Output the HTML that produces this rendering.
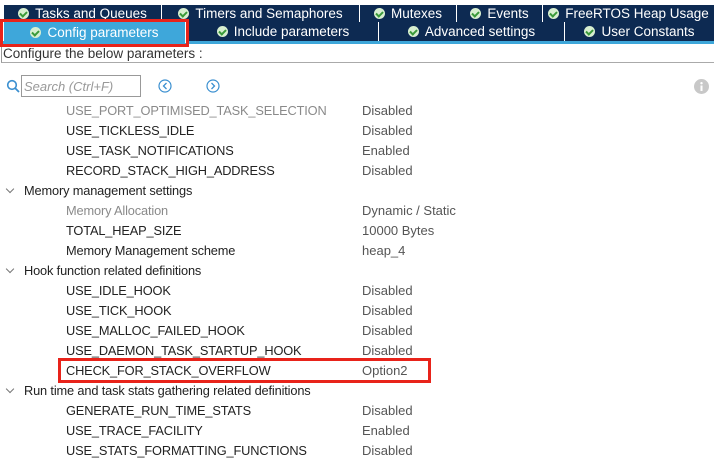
<!DOCTYPE html>
<html><head><style>
*{margin:0;padding:0;box-sizing:border-box}
body{width:714px;height:465px;background:#fff;font-family:"Liberation Sans",sans-serif;position:relative;overflow:hidden}
.tab{position:absolute;background:#0d2a52;color:#fff;font-size:13.5px;display:flex;align-items:center;justify-content:center;border-right:1px solid #fff;white-space:nowrap}
.ck{display:inline-block;width:11px;height:11px;border-radius:50%;background:#d8efd0;margin-right:6px;position:relative}
.ck:after{content:"";position:absolute;left:3px;top:2px;width:3px;height:5px;border:solid #3a9a3a;border-width:0 2px 2px 0;transform:rotate(45deg)}
.r{position:absolute;font-size:12.8px;letter-spacing:-0.15px;color:#222;white-space:nowrap;line-height:20px;margin-top:1px}
.g{color:#8a8a8a}
.v{position:absolute;left:362px;font-size:13px;color:#555;line-height:20px;margin-top:1px}
.arr{position:absolute;left:7px;width:6px;height:6px;border:solid #777;border-width:0 1px 1px 0;transform:rotate(45deg)}
</style></head><body>
<div class="tab" style="left:4px;top:5px;width:158px;height:17px"><span class="ck"></span>Tasks and Queues</div>
<div class="tab" style="left:162px;top:5px;width:198px;height:17px"><span class="ck"></span>Timers and Semaphores</div>
<div class="tab" style="left:360px;top:5px;width:97px;height:17px"><span class="ck"></span>Mutexes</div>
<div class="tab" style="left:457px;top:5px;width:86px;height:17px"><span class="ck"></span>Events</div>
<div class="tab" style="left:543px;top:5px;width:171px;height:17px;border-right:0"><span class="ck"></span>FreeRTOS Heap Usage</div>
<div class="tab" style="left:188px;top:22px;width:191px;height:19px"><span class="ck"></span>Include parameters</div>
<div class="tab" style="left:379px;top:22px;width:186px;height:19px"><span class="ck"></span>Advanced settings</div>
<div class="tab" style="left:565px;top:22px;width:149px;height:19px;border-right:0"><span class="ck"></span>User Constants</div>
<div style="position:absolute;left:0;top:41px;width:714px;height:3px;background:#3ea7da"></div>
<div class="tab" style="left:4px;top:22px;width:182px;height:21px;background:#3ea7da"><span class="ck"></span>Config parameters</div>
<div style="position:absolute;left:0;top:19px;width:189px;height:28px;border:3px solid #e8231a"></div>
<div style="position:absolute;left:1px;top:47px;width:713px;height:16px;border-left:1px solid #999;border-bottom:1px solid #aaa;font-size:13.5px;color:#333;line-height:14px;padding-left:1px">Configure the below parameters :</div>
<svg style="position:absolute;left:6px;top:79px" width="14" height="14"><circle cx="6" cy="6" r="4.3" fill="none" stroke="#3a8fd0" stroke-width="1.6"/><line x1="9" y1="9" x2="13" y2="13" stroke="#3a8fd0" stroke-width="1.8"/></svg>
<div style="position:absolute;left:21px;top:75px;width:120px;height:22px;border:1px solid #999;font-size:13px;font-style:italic;color:#999;padding:3px 0 0 2px">Search (Ctrl+F)</div>
<svg style="position:absolute;left:158px;top:79px" width="14" height="14"><circle cx="7" cy="7" r="6" fill="none" stroke="#3a8fd0" stroke-width="1.2"/><path d="M8.5 4 L5.5 7 L8.5 10" fill="none" stroke="#3a8fd0" stroke-width="1.3"/></svg>
<svg style="position:absolute;left:206px;top:79px" width="14" height="14"><circle cx="7" cy="7" r="6" fill="none" stroke="#3a8fd0" stroke-width="1.2"/><path d="M5.5 4 L8.5 7 L5.5 10" fill="none" stroke="#3a8fd0" stroke-width="1.3"/></svg>
<svg style="position:absolute;left:694px;top:79px" width="15" height="15"><circle cx="7.5" cy="7.5" r="7.5" fill="#c8c8c8"/><rect x="6.5" y="6.5" width="2" height="5.5" fill="#fff"/><circle cx="7.5" cy="4.2" r="1.2" fill="#fff"/></svg>

<div class="r g" style="left:66px;top:100px">USE_PORT_OPTIMISED_TASK_SELECTION</div><div class="v" style="top:100px">Disabled</div>
<div class="r" style="left:66px;top:120px">USE_TICKLESS_IDLE</div><div class="v" style="top:120px">Disabled</div>
<div class="r" style="left:66px;top:140px">USE_TASK_NOTIFICATIONS</div><div class="v" style="top:140px">Enabled</div>
<div class="r" style="left:66px;top:160px">RECORD_STACK_HIGH_ADDRESS</div><div class="v" style="top:160px">Disabled</div>
<div class="arr" style="top:186px"></div><div class="r" style="left:24px;top:180px">Memory management settings</div>
<div class="r g" style="left:66px;top:200px">Memory Allocation</div><div class="v g" style="top:200px">Dynamic / Static</div>
<div class="r" style="left:66px;top:220px">TOTAL_HEAP_SIZE</div><div class="v" style="top:220px">10000 Bytes</div>
<div class="r" style="left:66px;top:240px">Memory Management scheme</div><div class="v" style="top:240px">heap_4</div>
<div class="arr" style="top:266px"></div><div class="r" style="left:24px;top:260px">Hook function related definitions</div>
<div class="r" style="left:66px;top:280px">USE_IDLE_HOOK</div><div class="v" style="top:280px">Disabled</div>
<div class="r" style="left:66px;top:300px">USE_TICK_HOOK</div><div class="v" style="top:300px">Disabled</div>
<div class="r" style="left:66px;top:320px">USE_MALLOC_FAILED_HOOK</div><div class="v" style="top:320px">Disabled</div>
<div class="r" style="left:66px;top:340px">USE_DAEMON_TASK_STARTUP_HOOK</div><div class="v" style="top:340px">Disabled</div>
<div class="r" style="left:66px;top:360px">CHECK_FOR_STACK_OVERFLOW</div><div class="v" style="top:360px">Option2</div>
<div style="position:absolute;left:58px;top:358px;width:373px;height:25px;border:3px solid #e8231a"></div>
<div class="arr" style="top:386px"></div><div class="r" style="left:24px;top:380px">Run time and task stats gathering related definitions</div>
<div class="r" style="left:66px;top:400px">GENERATE_RUN_TIME_STATS</div><div class="v" style="top:400px">Disabled</div>
<div class="r" style="left:66px;top:420px">USE_TRACE_FACILITY</div><div class="v" style="top:420px">Enabled</div>
<div class="r" style="left:66px;top:440px">USE_STATS_FORMATTING_FUNCTIONS</div><div class="v" style="top:440px">Disabled</div>
</body></html>
